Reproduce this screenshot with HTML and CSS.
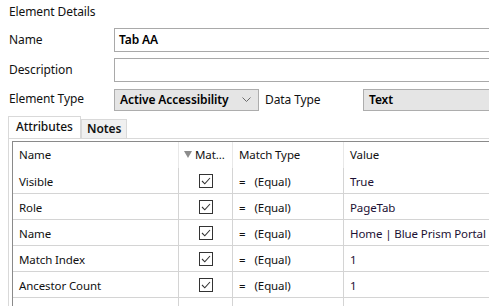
FILE: index.html
```html
<!DOCTYPE html>
<html lang="en">
  <head>
    <meta charset="UTF-8" />
    <title>Element Details</title>
    <link rel="stylesheet" href="styles.css">
  </head>
  <body>
    <div class="details">
      <div class="title">Element Details</div>

      <div class="form">
        <label class="label">Name</label>
        <div class="textbox">Tab AA</div>

        <label class="label">Description</label>
        <div class="textbox"></div>

        <label class="label">Element Type</label>
        <div class="type-row">
          <div class="combo combo-type">
            <span>Active Accessibility</span>
            <svg class="chevron" width="9" height="5" viewBox="0 0 9 5">
              <polyline points="0.5,0.5 4.5,4.5 8.5,0.5" fill="none" stroke="#6a6a6a" stroke-width="1" />
            </svg>
          </div>
          <label class="label data-label">Data Type</label>
          <div class="combo combo-data"><span>Text</span></div>
        </div>
      </div>

      <div class="tabs">
        <div class="tab active">Attributes</div>
        <div class="tab">Notes</div>
      </div>

      <div class="tab-page">
        <table class="grid">
          <colgroup>
            <col class="c-name">
            <col class="c-match">
            <col class="c-type">
            <col class="c-value">
          </colgroup>
          <thead>
            <tr>
              <th>Name</th>
              <th class="match-head">
                <svg class="filter" width="8" height="7" viewBox="0 0 8 7">
                  <polygon points="0,0 8,0 4,7" fill="#8c8c8c" />
                </svg>Mat...
              </th>
              <th>Match Type</th>
              <th>Value</th>
            </tr>
          </thead>
          <tbody id="rows"></tbody>
        </table>
      </div>
    </div>

    <script>
      const attributes = [
        ["Visible", "True"],
        ["Role", "PageTab"],
        ["Name", "Home | Blue Prism Portal"],
        ["Match Index", "1"],
        ["Ancestor Count", "1"],
        ["", ""]
      ];

      const tick =
        '<svg class="check" width="14" height="14" viewBox="0 0 14 14">' +
        '<rect x="0.5" y="0.5" width="13" height="13" fill="#fff" stroke="#333" />' +
        '<polyline points="3,7 5.8,9.8 11,4" fill="none" stroke="#333" stroke-width="1.1" />' +
        '</svg>';

      const tbody = document.getElementById("rows");
      attributes.forEach(([name, value]) => {
        const tr = document.createElement("tr");
        const filled = name !== "";
        tr.innerHTML =
          `<td>${name}</td>` +
          `<td class="center">${filled ? tick : ""}</td>` +
          `<td>${filled ? '<span class="eq">=</span>(Equal)' : ""}</td>` +
          `<td class="value">${value}</td>`;
        tbody.appendChild(tr);
      });
    </script>
  </body>
</html>
```

FILE: styles.css
```css
body {
  font-family: "Noto Sans", "Open Sans", sans-serif;
  font-size: 12px;
  letter-spacing: -0.1px;
  color: #111;
  margin: 0;
  padding: 0;
  background: #fff;
  overflow: hidden;
}

.details {
  padding-top: 4px;
}

.title {
  line-height: 16px;
  padding-left: 9px;
}

.form {
  display: grid;
  grid-template-columns: 105px 1fr;
  grid-template-rows: 24px 24px 22px;
  row-gap: 6px;
  margin-top: 8px;
  padding-left: 9px;
  align-items: center;
}

.label {
  line-height: 16px;
}

.textbox {
  height: 24px;
  box-sizing: border-box;
  border: 1px solid #a9a9a9;
  border-right: none;
  padding: 0 4px;
  line-height: 21px;
  font-weight: 600;
  color: #000;
}

.type-row {
  display: flex;
  align-items: center;
  height: 22px;
  margin-top: 1px;
}

.combo {
  height: 22px;
  box-sizing: border-box;
  background: #e5e5e5;
  border: 1px solid #adadad;
  display: flex;
  align-items: center;
  padding: 0 5px;
  font-weight: 600;
  color: #000;
}

.combo-type {
  width: 145px;
  justify-content: space-between;
}

.chevron {
  margin-right: 2px;
}

.data-label {
  width: 98px;
  padding-left: 6px;
}

.combo-data {
  flex: 1;
  border-right: none;
}

.tabs {
  display: flex;
  align-items: flex-end;
  margin-top: 6px;
  padding-left: 8px;
  height: 22px;
}

.tab {
  box-sizing: border-box;
  border: 1px solid #d9d9d9;
  border-bottom: none;
  background: #f0f0f0;
  height: 19px;
  line-height: 18px;
  padding: 0 5px;
  font-weight: 600;
}

.tab.active {
  background: #fff;
  height: 22px;
  line-height: 20px;
  padding: 0 7px;
  width: 73px;
  font-weight: 500;
}

.tab-page {
  margin-left: 8px;
  border-top: 1px solid #d9d9d9;
  border-left: 1px solid #d9d9d9;
  padding: 2px 0 0 3px;
}

.grid {
  border-collapse: separate;
  border-spacing: 0;
  table-layout: fixed;
  width: 478px;
  border-top: 1px solid #8a8a8a;
  border-left: 1px solid #8a8a8a;
  font-size: 11.5px;
}

.c-name {
  width: 165px;
}

.c-match {
  width: 54px;
}

.c-type {
  width: 111px;
}

.grid th {
  box-sizing: border-box;
  font-weight: normal;
  text-align: left;
  height: 26px;
  padding: 0 6px 2px;
  border-left: 1px solid #e8e8e8;
  white-space: nowrap;
}

.grid th:first-child,
.grid td:first-child {
  border-left: none;
}

.match-head {
  padding-left: 5px !important;
}

.filter {
  margin-right: 3px;
  vertical-align: 1px;
}

.grid td {
  box-sizing: border-box;
  height: 26px;
  padding: 1px 6px 0;
  border-left: 1px solid #d4d4d4;
  border-bottom: 1px solid #d4d4d4;
  white-space: nowrap;
  overflow: hidden;
}

.center {
  text-align: center;
}

.check {
  display: block;
  margin: 0 auto;
}

.eq {
  margin-right: 9px;
}

.value {
  color: #1c1033;
}
```
